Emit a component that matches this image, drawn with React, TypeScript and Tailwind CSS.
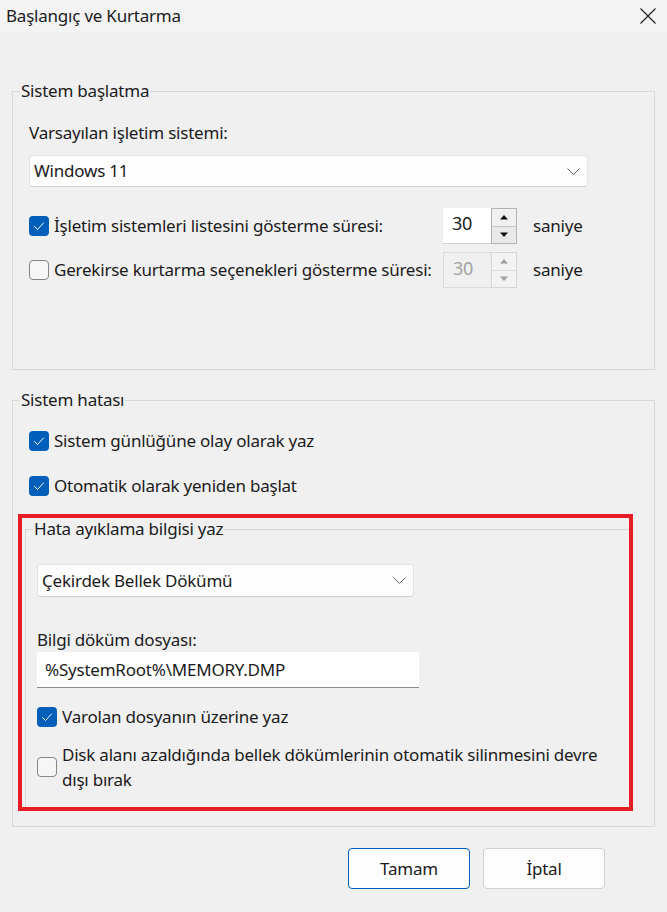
import React from 'react'

function CheckBox({ checked }: { checked?: boolean }) {
  if (checked) {
    return (
      <span className="flex h-[20px] w-[20px] shrink-0 items-center justify-center rounded-[4px] bg-[#005fb8]">
        <svg width="20" height="20" viewBox="0 0 20 20" fill="none">
          <polyline points="5.5,10.5 8.5,13.5 14.5,7" stroke="#ffffff" strokeWidth="1" strokeLinecap="round" strokeLinejoin="round" />
        </svg>
      </span>
    )
  }
  return <span className="h-[20px] w-[20px] shrink-0 rounded-[4px] border border-[#858585] bg-[#f6f6f6]" />
}

function Chevron() {
  return (
    <svg width="13" height="7" viewBox="0 0 13 7" fill="none">
      <polyline points="0.5,0.5 6.5,6.5 12.5,0.5" stroke="#5f5f5f" strokeWidth="1" />
    </svg>
  )
}

function Combo({ label, className }: { label: string; className: string }) {
  return (
    <div className={`flex items-center justify-between rounded-[4px] border border-[#e3e3e3] border-b-[#cfcfcf] bg-[#fdfdfd] pl-[4px] pr-[7px] ${className}`}>
      <span>{label}</span>
      <Chevron />
    </div>
  )
}

function Arrow({ up, color }: { up?: boolean; color: string }) {
  return (
    <svg width="10" height="6" viewBox="0 0 10 6">
      <polygon points={up ? '1,5.5 5,1 9,5.5' : '1,0.5 5,5 9,0.5'} fill={color} />
    </svg>
  )
}

function SpinBox({ disabled }: { disabled?: boolean }) {
  return (
    <div className="flex h-[36px]">
      <div
        className={`flex w-[48px] items-start pl-[9px] pt-[3px] text-[18px] ${
          disabled ? 'border border-r-0 border-[#dadada] bg-[#f0f0f0] text-[#a3a3a3]' : 'border-b border-[#d2d2d2] bg-white'
        }`}
      >
        30
      </div>
      <div className={`flex w-[26px] flex-col border ${disabled ? 'border-[#d6d6d6]' : 'border-[#b4b4b4]'}`}>
        <div className={`flex flex-1 items-center justify-center border-b ${disabled ? 'border-[#dcdcdc] bg-[#f3f3f3]' : 'border-[#c4c4c4] bg-[#f0f0f0]'}`}>
          <Arrow up color={disabled ? '#a0a0a0' : '#111111'} />
        </div>
        <div className={`flex flex-1 items-center justify-center ${disabled ? 'bg-[#f3f3f3]' : 'bg-[#e8e8e8]'}`}>
          <Arrow color={disabled ? '#a0a0a0' : '#111111'} />
        </div>
      </div>
    </div>
  )
}

function CheckRow({ checked, label }: { checked?: boolean; label: string }) {
  return (
    <div className="flex h-[24px] items-center gap-[5px]">
      <CheckBox checked={checked} />
      <span>{label}</span>
    </div>
  )
}

export default function App() {
  return (
    <div
      className="flex h-[912px] w-[667px] flex-col bg-[#f0f0f0] text-[17px] leading-[24px] tracking-[-0.22px] text-[#1b1b1b]"
      style={{ fontFamily: '"Noto Sans", "Open Sans", sans-serif' }}
    >
      {/* title bar */}
      <div className="flex h-[32px] items-center justify-between bg-[#f3f3f3] pl-[6px] pr-[10px]">
        <span>Başlangıç ve Kurtarma</span>
        <svg width="18" height="18" viewBox="0 0 18 18" fill="none">
          <path d="M1.5 1.5 L16.5 16.5 M16.5 1.5 L1.5 16.5" stroke="#1b1b1b" strokeWidth="1.1" />
        </svg>
      </div>

      {/* Sistem başlatma */}
      <fieldset className="mx-[12px] mt-[48px] h-[290px] border border-[#d8d8d8] pl-[7px]">
        <legend className="px-[1px] leading-[22px]">Sistem başlatma</legend>
        <div className="flex flex-col pl-[9px]">
          <div className="mt-[19px]">Varsayılan işletim sistemi:</div>
          <Combo label="Windows 11" className="mt-[10px] h-[32px] w-[559px]" />
          <div className="mt-[21px] flex items-center">
            <div className="flex w-[414px] items-center gap-[5px]">
              <CheckBox checked />
              <span>İşletim sistemleri listesini gösterme süresi:</span>
            </div>
            <SpinBox />
            <span className="ml-[16px]">saniye</span>
          </div>
          <div className="mt-[8px] flex items-center">
            <div className="flex w-[414px] items-center gap-[5px]">
              <CheckBox />
              <span>Gerekirse kurtarma seçenekleri gösterme süresi:</span>
            </div>
            <SpinBox disabled />
            <span className="ml-[16px]">saniye</span>
          </div>
        </div>
      </fieldset>

      {/* Sistem hatası */}
      <fieldset className="mx-[12px] mt-[19px] h-[438px] border border-[#d8d8d8] pl-[7px]">
        <legend className="px-[1px] leading-[22px]">Sistem hatası</legend>
        <div className="flex flex-col pl-[9px]">
          <div className="mt-[18px]">
            <CheckRow checked label="Sistem günlüğüne olay olarak yaz" />
          </div>
          <div className="mt-[21px]">
            <CheckRow checked label="Otomatik olarak yeniden başlat" />
          </div>
        </div>

        <div className="ml-[-2px] mt-[16px] flex h-[297px] w-[615px] border-4 border-[#e81c26]">
          <fieldset className="ml-[3px] flex-1 border border-b-0 border-r-0 border-[#d8d8d8] pl-[7px]">
            <legend className="px-[1px] leading-[22px]">Hata ayıklama bilgisi yaz</legend>
            <div className="flex flex-col pl-[4px]">
              <Combo label="Çekirdek Bellek Dökümü" className="mt-[24px] h-[33px] w-[377px]" />
              <div className="mt-[31px]">Bilgi döküm dosyası:</div>
              <div className="flex h-[36px] w-[382px] items-center border-b border-[#8c8c8c] bg-white pl-[8px]">
                %SystemRoot%\MEMORY.DMP
              </div>
              <div className="mt-[17px]">
                <CheckRow checked label="Varolan dosyanın üzerine yaz" />
              </div>
              <div className="mt-[13px] flex items-center gap-[5px] leading-[25px]">
                <CheckBox />
                <span>
                  Disk alanı azaldığında bellek dökümlerinin otomatik silinmesini devre
                  <br />
                  dışı bırak
                </span>
              </div>
            </div>
          </fieldset>
        </div>
      </fieldset>

      {/* buttons */}
      <div className="mt-[21px] flex justify-end gap-[13px] pr-[62px]">
        <button className="h-[41px] w-[122px] rounded-[4px] border border-[#005fb8] bg-[#fdfdfd]">Tamam</button>
        <button className="h-[41px] w-[122px] rounded-[4px] border border-[#d0d0d0] bg-[#fdfdfd]">İptal</button>
      </div>
    </div>
  )
}
